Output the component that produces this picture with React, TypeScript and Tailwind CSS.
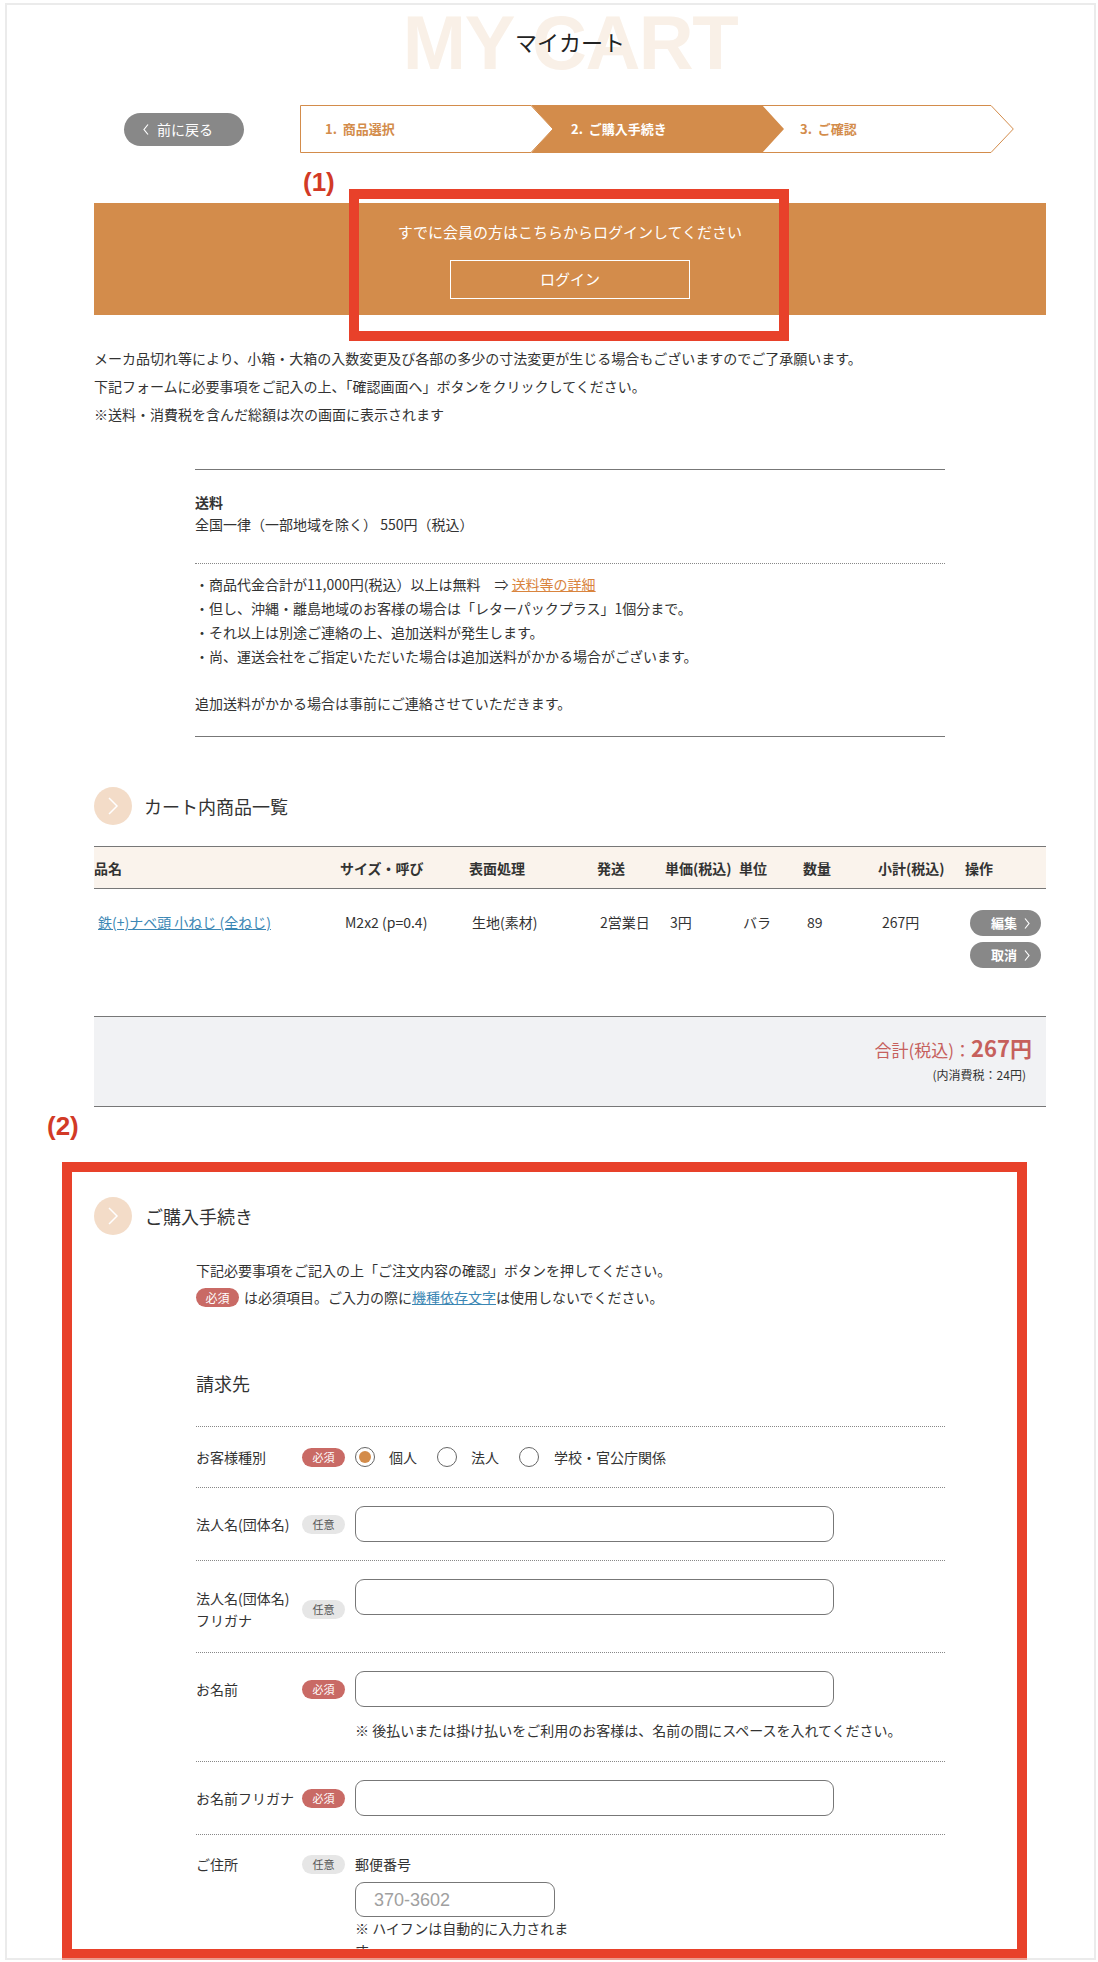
import React from "react";

function CircleIcon() {
  return (
    <div className="w-[38px] h-[38px] rounded-full bg-[#f3dcc8] flex-none">
      <svg width="38" height="38" viewBox="0 0 38 38">
        <polyline points="15,11 23,19 15,27" fill="none" stroke="#ffffff" strokeWidth="1.5" />
      </svg>
    </div>
  );
}

function SmallChevron({ left }: { left?: boolean }) {
  return (
    <svg width="6" height="11" viewBox="0 0 6 11" className="flex-none">
      {left ? (
        <polyline points="5,0.5 1,5.5 5,10.5" fill="none" stroke="#ffffff" strokeWidth="1.2" />
      ) : (
        <polyline points="1,0.5 5,5.5 1,10.5" fill="none" stroke="#ffffff" strokeWidth="1.2" />
      )}
    </svg>
  );
}

function Radio({ checked }: { checked?: boolean }) {
  return (
    <span className="w-[20px] h-[20px] rounded-full border border-[#666] bg-white flex items-center justify-center flex-none">
      {checked && <span className="w-[12px] h-[12px] rounded-full bg-[#d38c4b]" />}
    </span>
  );
}

function Required() {
  return (
    <span className="w-[43px] h-[19px] rounded-full bg-[#c96a65] text-white text-[11px] leading-[19px] text-center flex-none">
      必須
    </span>
  );
}

function Optional() {
  return (
    <span className="w-[43px] h-[19px] rounded-full bg-[#e6e6e6] text-[#555] text-[11px] leading-[19px] text-center flex-none">
      任意
    </span>
  );
}

function TextInput() {
  return <div className="w-[479px] h-[36px] rounded-[9px] border border-[#777] bg-white flex-none" />;
}

export default function App() {
  return (
    <div className="relative w-[1098px] h-[1962px] bg-white pt-[3px] pl-[5px] pr-[2px] font-['Noto_Sans_CJK_JP',sans-serif] text-[#333]">
      <div className="h-[1957px] border-2 border-[#ebebeb] overflow-hidden">
        <div className="ml-[87px] w-[952px]">
          {/* Title */}
          <div className="relative h-[75px]">
            <div className="text-center font-['Liberation_Sans',sans-serif] font-bold text-[76px] leading-[75px] tracking-[-1.5px] text-[#f9f0e7]">
              MY CART
            </div>
            <div className="absolute left-0 right-0 top-[23px] text-center text-[22px] leading-[26px] text-[#222]">
              マイカート
            </div>
          </div>

          {/* Steps */}
          <div className="mt-[25px] flex items-center h-[48px]">
            <div className="ml-[30px] w-[120px] h-[33px] rounded-full bg-[#888888] flex items-center pl-[19px] gap-[8px] text-white text-[14px] leading-[20px]">
              <SmallChevron left />
              <span>前に戻る</span>
            </div>
            <div className="relative ml-[56px] w-[714px] h-[48px]">
              <svg className="absolute inset-0" width="714" height="48" viewBox="0 0 714 48">
                <polygon points="462,0.5 691,0.5 713.3,24 691,47.5 462,47.5" fill="#ffffff" stroke="#d38c4b" strokeWidth="1" />
                <polygon points="0.5,0.5 231,0.5 253,24 231,47.5 0.5,47.5" fill="#ffffff" stroke="#d38c4b" strokeWidth="1" />
                <polygon points="231,0 462,0 484,24 462,48 231,48 253,24" fill="#d38c4b" />
              </svg>
              <div className="relative flex h-full items-center text-[13px] font-bold leading-[18px]">
                <span className="ml-[25px] w-[246px] text-[#d38c4b]">1.&nbsp;&nbsp;商品選択</span>
                <span className="w-[229px] text-white">2.&nbsp;&nbsp;ご購入手続き</span>
                <span className="text-[#d38c4b]">3.&nbsp;&nbsp;ご確認</span>
              </div>
            </div>
          </div>

          {/* Login banner */}
          <div className="mt-[50px] h-[112px] bg-[#d38c4b] flex flex-col items-center pt-[17px]">
            <div className="text-white text-[15px] leading-[24px]">すでに会員の方はこちらからログインしてください</div>
            <div className="mt-[16px] w-[240px] h-[39px] border border-white flex items-center justify-center text-white text-[15px]">
              ログイン
            </div>
          </div>

          {/* Notes */}
          <div className="mt-[29px] text-[14px] leading-[28px]">
            <p>メーカ品切れ等により、小箱・大箱の入数変更及び各部の多少の寸法変更が生じる場合もございますのでご了承願います。</p>
            <p>下記フォームに必要事項をご記入の上、「確認画面へ」ボタンをクリックしてください。</p>
            <p>※送料・消費税を含んだ総額は次の画面に表示されます</p>
          </div>

          {/* Shipping box */}
          <div className="mt-[41px] ml-[101px] w-[750px] border-y border-[#777] pt-[21px] pb-[21px] text-[14px]">
            <div className="leading-[22px]">
              <p className="font-bold">送料</p>
              <p>全国一律（一部地域を除く） 550円（税込）</p>
            </div>
            <div className="mt-[28px] border-t border-dotted border-[#888] pt-[8px] leading-[24px]">
              <p>
                ・商品代金合計が11,000円(税込）以上は無料　⇒{" "}
                <a className="text-[#d9843e] underline">送料等の詳細</a>
              </p>
              <p>・但し、沖縄・離島地域のお客様の場合は「レターパックプラス」1個分まで。</p>
              <p>・それ以上は別途ご連絡の上、追加送料が発生します。</p>
              <p>・尚、運送会社をご指定いただいた場合は追加送料がかかる場合がございます。</p>
              <p className="mt-[23px]">追加送料がかかる場合は事前にご連絡させていただきます。</p>
            </div>
          </div>

          {/* Cart heading */}
          <div className="mt-[50px] flex items-center h-[38px] gap-[12px]">
            <CircleIcon />
            <span className="text-[18px] leading-[26px]">カート内商品一覧</span>
          </div>

          {/* Table */}
          <div className="mt-[21px]">
            <div className="grid grid-cols-[246px_129px_128px_68px_74px_64px_75px_87px_81px] h-[43px] items-center border-y border-[#777] bg-[#faf3ec] text-[14px] font-bold leading-[20px]">
              <div>品名</div>
              <div>サイズ・呼び</div>
              <div>表面処理</div>
              <div>発送</div>
              <div>単価(税込)</div>
              <div>単位</div>
              <div>数量</div>
              <div>小計(税込)</div>
              <div>操作</div>
            </div>
            <div className="grid grid-cols-[246px_129px_128px_68px_74px_64px_75px_87px_81px] h-[127px] items-start text-[14px] leading-[22px]">
              <div className="pt-[22px] pl-[4px]">
                <a className="text-[#3c87b4] underline">鉄(+)ナベ頭 小ねじ (全ねじ)</a>
              </div>
              <div className="pt-[22px] pl-[5px]">M2x2 (p=0.4)</div>
              <div className="pt-[22px] pl-[3px]">生地(素材)</div>
              <div className="pt-[22px] pl-[3px]">2営業日</div>
              <div className="pt-[22px] pl-[5px]">3円</div>
              <div className="pt-[22px] pl-[4px]">バラ</div>
              <div className="pt-[22px] pl-[4px]">89</div>
              <div className="pt-[22px] pl-[4px]">267円</div>
              <div className="pt-[21px] pl-[5px] flex flex-col gap-[6px]">
                <div className="w-[71px] h-[26px] rounded-full bg-[#888888] flex items-center pl-[21px] gap-[7px] text-white text-[13px] font-bold">
                  <span>編集</span>
                  <SmallChevron />
                </div>
                <div className="w-[71px] h-[26px] rounded-full bg-[#888888] flex items-center pl-[21px] gap-[7px] text-white text-[13px] font-bold">
                  <span>取消</span>
                  <SmallChevron />
                </div>
              </div>
            </div>
            <div className="h-[91px] border-y border-[#777] bg-[#f1f2f4] flex flex-col items-end">
              <div className="mt-[15px] pr-[14px] h-[30px] leading-[30px] text-[#c6605c]">
                <span className="text-[17px]">合計(税込)：</span>
                <span className="text-[22px] font-bold">267円</span>
              </div>
              <div className="mt-[4px] pr-[20px] text-[12px] leading-[18px]">(内消費税：24円)</div>
            </div>
          </div>

          {/* Purchase section heading */}
          <div className="mt-[90px] flex items-center h-[38px] gap-[13px]">
            <CircleIcon />
            <span className="text-[18px] leading-[26px]">ご購入手続き</span>
          </div>

          <div className="ml-[102px] mt-[22px] text-[14px] leading-[27px]">
            <p>下記必要事項をご記入の上「ご注文内容の確認」ボタンを押してください。</p>
            <p className="flex items-center">
              <span className="w-[43px] h-[19px] rounded-full bg-[#c96a65] text-white text-[12px] leading-[19px] text-center mr-[5px]">必須</span>
              <span>
                は必須項目。ご入力の際に<a className="text-[#3c87b4] underline">機種依存文字</a>は使用しないでください。
              </span>
            </p>
          </div>

          <div className="ml-[102px] mt-[59px] text-[18px] leading-[26px]">請求先</div>

          {/* Form */}
          <div className="ml-[102px] mt-[30px] w-[749px] border-t border-dotted border-[#888] text-[14px] leading-[22px]">
            {/* Row 1 */}
            <div className="h-[61px] border-b border-dotted border-[#888] flex items-center">
              <div className="w-[159px] flex items-center flex-none">
                <span className="w-[106px]">お客様種別</span>
                <Required />
              </div>
              <div className="flex items-center">
                <Radio checked />
                <span className="ml-[14px]">個人</span>
                <span className="ml-[20px]"><Radio /></span>
                <span className="ml-[14px]">法人</span>
                <span className="ml-[20px]"><Radio /></span>
                <span className="ml-[15px]">学校・官公庁関係</span>
              </div>
            </div>
            {/* Row 2 */}
            <div className="h-[73px] border-b border-dotted border-[#888] flex items-center">
              <div className="w-[159px] flex items-center flex-none">
                <span className="w-[106px]">法人名(団体名)</span>
                <Optional />
              </div>
              <TextInput />
            </div>
            {/* Row 3 */}
            <div className="h-[92px] border-b border-dotted border-[#888] flex items-start pt-[18px]">
              <div className="w-[159px] flex items-center flex-none mt-[8px]">
                <span className="w-[106px]">
                  法人名(団体名)
                  <br />
                  フリガナ
                </span>
                <Optional />
              </div>
              <TextInput />
            </div>
            {/* Row 4 */}
            <div className="h-[109px] border-b border-dotted border-[#888] flex items-start pt-[18px]">
              <div className="w-[159px] h-[36px] flex items-center flex-none">
                <span className="w-[106px]">お名前</span>
                <Required />
              </div>
              <div className="flex flex-col">
                <TextInput />
                <p className="mt-[12px]">※ 後払いまたは掛け払いをご利用のお客様は、名前の間にスペースを入れてください。</p>
              </div>
            </div>
            {/* Row 5 */}
            <div className="h-[73px] border-b border-dotted border-[#888] flex items-center">
              <div className="w-[159px] flex items-center flex-none">
                <span className="w-[106px]">お名前フリガナ</span>
                <Required />
              </div>
              <TextInput />
            </div>
            {/* Row 6 */}
            <div className="flex items-start pt-[18px]">
              <div className="w-[159px] h-[22px] flex items-center flex-none">
                <span className="w-[106px]">ご住所</span>
                <Optional />
              </div>
              <div className="flex flex-col">
                <p>郵便番号</p>
                <div className="mt-[7px] w-[200px] h-[35px] rounded-[9px] border border-[#777] flex items-center pl-[18px] font-['Liberation_Sans',sans-serif] text-[18px] text-[#a0a0a0]">
                  370-3602
                </div>
                <p className="w-[220px]">※ ハイフンは自動的に入力されます</p>
              </div>
            </div>
          </div>
        </div>
      </div>

      {/* Annotations */}
      <div className="absolute left-[303px] top-[167px] font-['Liberation_Sans',sans-serif] font-bold text-[26px] leading-[30px] text-[#d23a26]">
        (1)
      </div>
      <div className="absolute left-[349px] top-[189px] w-[440px] h-[152px] border-[10px] border-[#e8412a]" />
      <div className="absolute left-[47px] top-[1111px] font-['Liberation_Sans',sans-serif] font-bold text-[26px] leading-[30px] text-[#d23a26]">
        (2)
      </div>
      <div className="absolute left-[62px] top-[1162px] w-[965px] h-[796px] border-[10px] border-b-[9px] border-[#e8412a]" />
      <div className="absolute left-[62px] top-[1958px] w-[965px] h-[2px] bg-[#eb9a8c]" />
    </div>
  );
}
